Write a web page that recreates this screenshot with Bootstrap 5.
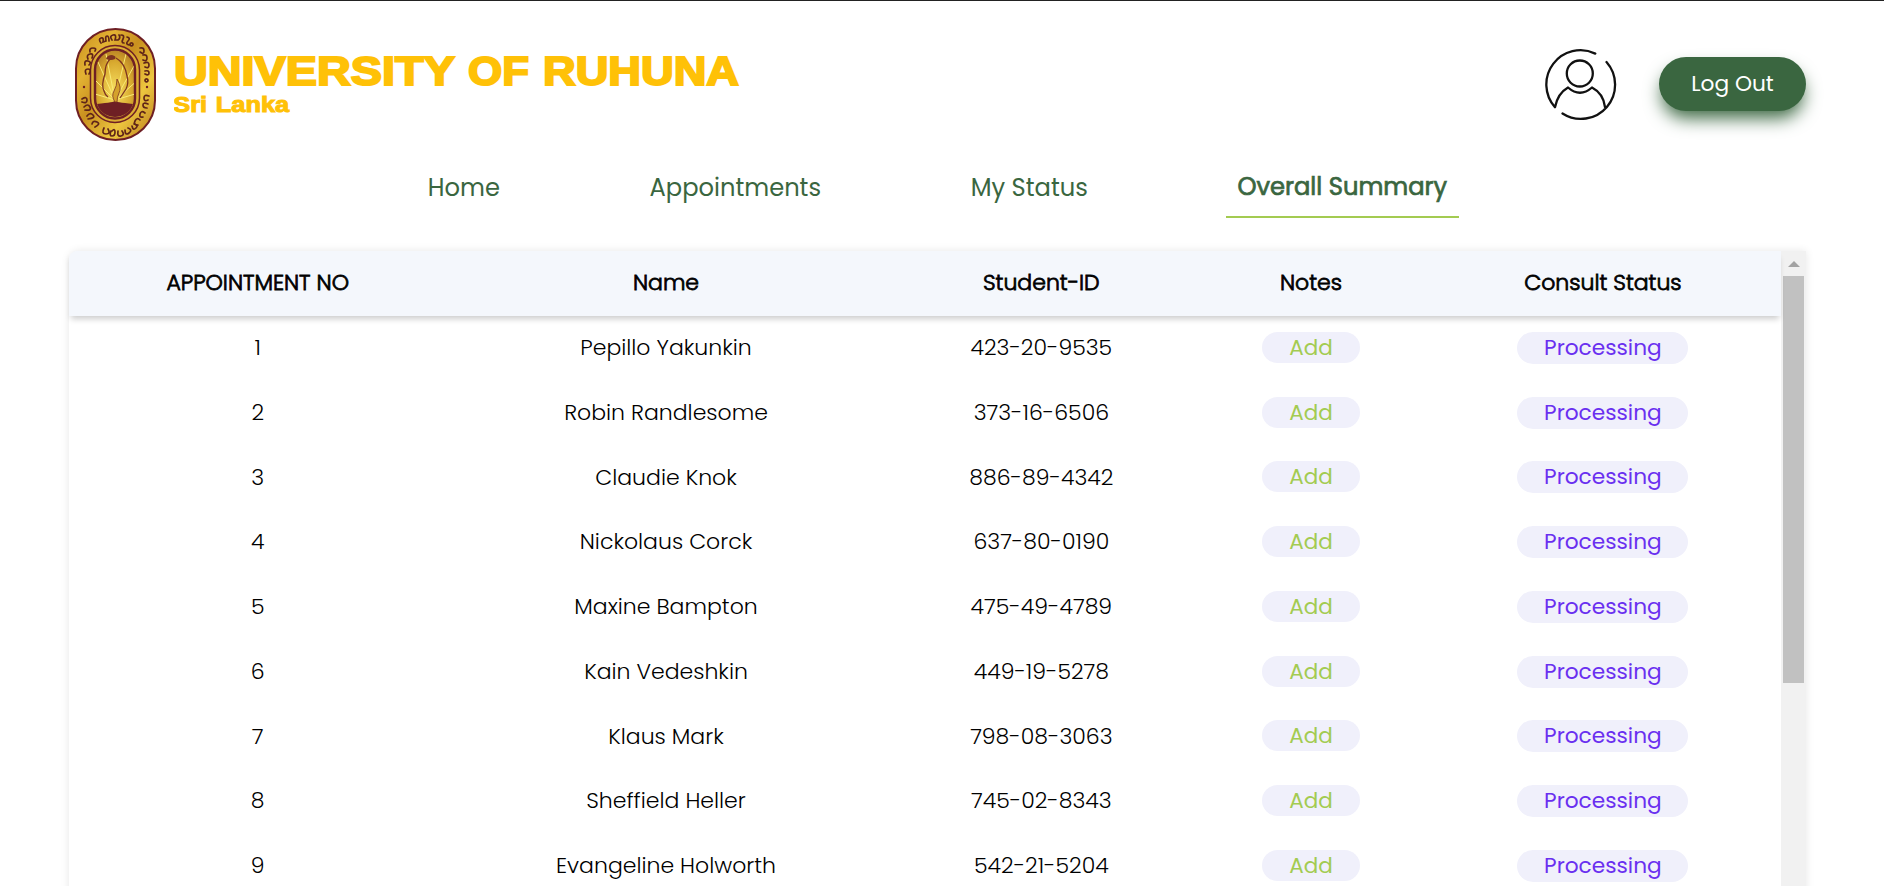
<!DOCTYPE html>
<html lang="en">
<head>
<meta charset="utf-8">
<meta name="viewport" content="width=device-width, initial-scale=1">
<title>University of Ruhuna</title>
<link href="https://cdn.jsdelivr.net/npm/bootstrap@5.3.0/dist/css/bootstrap.min.css" rel="stylesheet">
<style>
  body { font-family: Poppins, "Liberation Sans", sans-serif; font-weight: 400; color: #000; background: #fff; border-top: 1px solid #222; }
  .page { height: 885px; padding: 0 78px 0 69px; }
  .top-bar { height: 155px; padding-top: 12px; }
  .brand { margin-left: 6px; gap: 16.5px; }
  .crest { margin-top: 15px; }
  .wordmark { margin-top: 23px; }
  .profile { margin: 34px 42px 0 0; }
  .btn-logout { width: 147px; height: 54px; margin-top: 44px; border-radius: 27px; background: #3a6640; color: #fff; font-size: 21.7px; font-weight: 400; border: 0; box-shadow: 0 10px 18px -3px #3a6640; }
  .main-nav { gap: 127px; height: 62px; }
  .main-nav .nav-link { color: #3a6640; font-size: 24.2px; line-height: 36px; height: 62px; padding: 13.5px 11.3px 0; }
  .main-nav .nav-link.active { border-bottom: 2px solid #a3cb51; padding-top: 12.5px; -webkit-text-stroke: .7px #3a6640; }
  .summary { margin-top: 33px; height: 700px; border-radius: 10px 0 0 0; box-shadow: 0 0 9px rgba(0,0,0,.1); }
  .summary table { table-layout: fixed; font-size: 22px; font-weight: 300; color: #000; border-collapse: separate; border-spacing: 0; }
  .summary th, .summary td { height: 64.75px; padding: 0 0 0 .8px; line-height: 32px; text-align: center; vertical-align: middle; }
  .summary th:last-child, .summary td:last-child { padding: 0; }
  .summary thead { position: relative; box-shadow: 0 5px 6px -2px rgba(0,0,0,.2); }
  .summary th { background: #f4f7fc; font-weight: 300; -webkit-text-stroke: .8px #000; }
  .summary th:first-child { border-top-left-radius: 8px; }
  .pill { display: block; margin: -.6px auto 0; border-radius: 16px; background: #f0f0fb; font-weight: 400; }
  .pill-add { width: 98px; height: 31px; line-height: 31px; margin-top: -1.4px; color: #a3cb51; font-size: 21.5px; }
  .pill-proc { width: 171px; height: 32px; line-height: 32px; color: #6a2ff0; font-size: 21.7px; }
  .track { width: 25px; background: #f1f1f1; padding: 10px 2px 0; }
  .thumb { width: 21px; height: 407px; margin-top: 9px; background: #c1c1c1; }
</style>
<script src="https://cdn.jsdelivr.net/npm/bootstrap@5.3.0/dist/js/bootstrap.bundle.min.js"></script>
</head>
<body class="overflow-hidden">
<div class="page overflow-hidden">
  <header class="top-bar d-flex justify-content-between align-items-start">
    <div class="brand d-flex">
      <svg class="crest" width="82" height="116" viewBox="0 0 82 116" aria-label="University crest">
        <defs>
          <linearGradient id="gold" x1="0" y1="0" x2="1" y2="1">
            <stop offset="0" stop-color="#c68a1c"/><stop offset=".25" stop-color="#e3b233"/><stop offset=".45" stop-color="#c9901f"/><stop offset=".7" stop-color="#edc63f"/><stop offset="1" stop-color="#b87a1b"/>
          </linearGradient>
          <radialGradient id="glow" cx=".5" cy=".6" r=".7"><stop offset="0" stop-color="#f8e060"/><stop offset=".6" stop-color="#d8a92f"/><stop offset="1" stop-color="#a9701f"/></radialGradient>
          <clipPath id="inner"><rect x="21" y="23" width="38" height="66" rx="19"/></clipPath>
        </defs>
        <rect x="1" y="1" width="79" height="111" rx="39.500" fill="url(#gold)" stroke="#6e1f24" stroke-width="2"/>
        <rect x="15.500" y="17.500" width="49" height="77" rx="24.500" fill="#dcae34" stroke="#6e1f24" stroke-width="1.500"/>
        <rect x="20" y="21.500" width="40" height="69" rx="20" fill="url(#glow)" stroke="#6e1f24" stroke-width="2.400"/>
        <g clip-path="url(#inner)">
          <path d="M40 72 23 34M40 72 31 26M40 72 51 26M40 72 59 38M40 72 18 50M40 72 63 52M40 72 20 66M40 72 60 66" stroke="#f8ea77" stroke-width="1"/>
          <path d="M22 76q18 -2 18 -3q0 1 18 3q-2 14 -18 14t-18 -14z" fill="#6e1f24"/>
          <path d="M40 74q-4 -6 -1 -11q3 -5 3 -12q5 9 2 14q-2 4 -2 9z" fill="#d4a22c" stroke="#7d3420" stroke-width=".8"/>
        </g>
        <path d="M35 31q-5 5 -5 15q-4 11 -1 17q1 4 4 6M41 30q9 5 11 18q2 7 -1 13l-6 9" fill="none" stroke="#7d3420" stroke-width="1.300"/>
        <path d="M31 31q1 -4 6 -4q5 1 3 4q-4 2 -9 0z" fill="#7d3420"/>
        <g fill="none" stroke="#5f2418" stroke-width="1.700" stroke-linecap="round">
          <path d="M26 15q-3 -4 0 -5t2 4l3 -1q-1 -5 1 -5t2 5M37 12q-3 -4 1 -5t2 5h3q3 -2 1 -5M46 7q4 0 2 4t1 4M52 9q4 1 1 4t1 4M56 15a1.500 1.500 0 1 0 1 0"/>
          <path d="M11 46q-2 -5 2 -5t1 5M10 37q-1 -5 3 -4t1 4M13 31q-2 -4 2 -5t2 4M15 24q-1 -4 3 -4t2 3M65 20q4 -1 4 3t-4 1M68 27q4 -1 4 3t-4 2M69 35q5 -2 5 2t-4 2M70 43q4 -1 4 2t-4 1M71 51a1.500 1.500 0 1 0 1 0"/>
          <path d="M7 71q5 -3 5 1t-5 2M9 79q4 -4 6 0t-5 3M12 88q3 -4 6 -1t-5 4M17 96q1 -4 5 -2t-2 5M74 68q-5 -2 -5 2t4 2M73 76q-5 -2 -5 1t4 3M70 85q-4 -3 -5 1t3 3M65 92q-3 -3 -5 1t3 4"/>
          <path d="M29 100q-3 6 2 6t2 -5M36 103q-2 5 1 5t3 -4t-3 -1M43 103q-1 6 3 5t1 -5M50 102q0 6 4 3t-1 -5M57 98q1 5 4 2t-2 -4"/>
        </g>
        <circle cx="9" cy="59" r="1.200" fill="#6e1f24"/><circle cx="72" cy="59" r="1.200" fill="#6e1f24"/>
      </svg>
      <svg class="wordmark" width="575" height="90" viewBox="0 0 575 90">
        <g font-family="Liberation Sans, sans-serif" font-weight="700" fill="#ffc107" stroke="#ffc107">
          <text y="48.500" font-size="40.500" stroke-width="2"><tspan x="0" textLength="280" lengthAdjust="spacingAndGlyphs">UNIVERSITY</tspan> <tspan x="294" textLength="61" lengthAdjust="spacingAndGlyphs">OF</tspan> <tspan x="369" textLength="196" lengthAdjust="spacingAndGlyphs">RUHUNA</tspan></text>
          <text x="-.8" y="75.500" font-size="21.500" stroke-width="1" word-spacing="1.500" textLength="116" lengthAdjust="spacingAndGlyphs">Sri Lanka</text>
        </g>
      </svg>
    </div>
    <div class="d-flex align-items-start">
      <svg class="profile" width="74" height="74" viewBox="0 0 74 74" fill="none" stroke="#111" stroke-width="2.300" stroke-linecap="round" stroke-linejoin="round" aria-label="Profile">
        <path d="M52.300 6.600A34.200 34.200 0 0 0 12 60.200C14 50 18 44.500 25 40.500Q37 51 49 40.500C57.500 45 61 51.500 62 60M63.500 15A34.200 34.200 0 0 1 19.500 66.500"/>
        <circle cx="36.800" cy="26.500" r="13"/>
      </svg>
      <button class="btn btn-logout p-0">Log Out</button>
    </div>
  </header>

  <nav class="main-nav nav justify-content-center flex-nowrap">
    <a class="nav-link" href="#">Home</a>
    <a class="nav-link" href="#">Appointments</a>
    <a class="nav-link" href="#">My Status</a>
    <a class="nav-link active" href="#">Overall Summary</a>
  </nav>

  <section class="summary d-flex">
    <div class="flex-grow-1">
      <table class="w-100">
        <colgroup><col style="width:22%"><col style="width:25.700%"><col style="width:18.150%"><col style="width:13.350%"><col style="width:20.800%"></colgroup>
        <thead><tr><th>APPOINTMENT NO</th><th>Name</th><th>Student-ID</th><th>Notes</th><th>Consult Status</th></tr></thead>
        <tbody>
          <tr><td>1</td><td>Pepillo Yakunkin</td><td>423-20-9535</td><td><span class="pill pill-add">Add</span></td><td><span class="pill pill-proc">Processing</span></td></tr>
          <tr><td>2</td><td>Robin Randlesome</td><td>373-16-6506</td><td><span class="pill pill-add">Add</span></td><td><span class="pill pill-proc">Processing</span></td></tr>
          <tr><td>3</td><td>Claudie Knok</td><td>886-89-4342</td><td><span class="pill pill-add">Add</span></td><td><span class="pill pill-proc">Processing</span></td></tr>
          <tr><td>4</td><td>Nickolaus Corck</td><td>637-80-0190</td><td><span class="pill pill-add">Add</span></td><td><span class="pill pill-proc">Processing</span></td></tr>
          <tr><td>5</td><td>Maxine Bampton</td><td>475-49-4789</td><td><span class="pill pill-add">Add</span></td><td><span class="pill pill-proc">Processing</span></td></tr>
          <tr><td>6</td><td>Kain Vedeshkin</td><td>449-19-5278</td><td><span class="pill pill-add">Add</span></td><td><span class="pill pill-proc">Processing</span></td></tr>
          <tr><td>7</td><td>Klaus Mark</td><td>798-08-3063</td><td><span class="pill pill-add">Add</span></td><td><span class="pill pill-proc">Processing</span></td></tr>
          <tr><td>8</td><td>Sheffield Heller</td><td>745-02-8343</td><td><span class="pill pill-add">Add</span></td><td><span class="pill pill-proc">Processing</span></td></tr>
          <tr><td>9</td><td>Evangeline Holworth</td><td>542-21-5204</td><td><span class="pill pill-add">Add</span></td><td><span class="pill pill-proc">Processing</span></td></tr>
        </tbody>
      </table>
    </div>
    <div class="track flex-shrink-0">
      <svg class="d-block mx-auto" width="12" height="6" viewBox="0 0 12 6"><path d="M6 0 12 6H0z" fill="#a3a3a3"/></svg>
      <div class="thumb"></div>
    </div>
  </section>
</div>
</body>
</html>
